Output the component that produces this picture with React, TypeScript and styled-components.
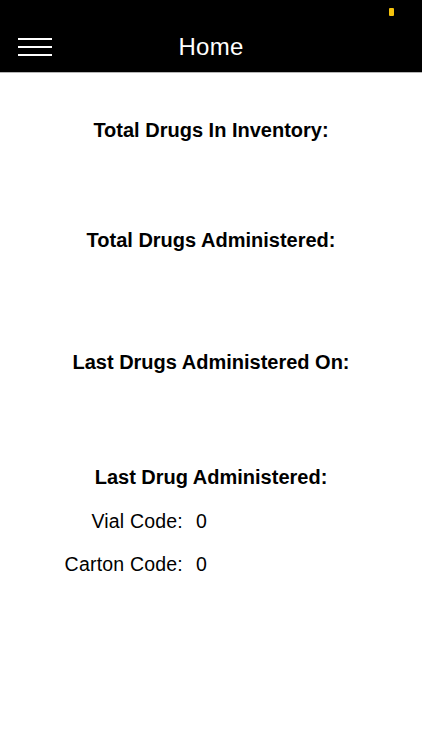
import React from 'react';
import styled, { createGlobalStyle } from 'styled-components';

const GlobalStyle = createGlobalStyle`
  html, body {
    margin: 0;
    padding: 0;
    background: #ffffff;
  }
  body {
    font-family: "Liberation Sans", Arial, Helvetica, sans-serif;
    color: #000;
  }
`;

const Screen = styled.div`
  width: 422px;
  min-height: 750px;
  display: flex;
  flex-direction: column;
  background: #fff;
`;

// top navigation bar
const NavBar = styled.header`
  position: relative;
  height: 73px;
  background: #000;
  border-bottom: 1px solid #b5b5b5;
  display: flex;
  align-items: center;
  justify-content: center;
  box-sizing: border-box;
  padding-top: 21px;
`;

const StatusMark = styled.span`
  position: absolute;
  top: 8px;
  left: 389px;
  width: 5px;
  height: 8px;
  background: #f4c20d;
  border-radius: 1px;
`;

const MenuButton = styled.button`
  position: absolute;
  left: 18px;
  top: 38px;
  width: 34px;
  height: 18px;
  padding: 0;
  border: none;
  background: transparent;
  display: flex;
  flex-direction: column;
  justify-content: space-between;
  cursor: pointer;
`;

const MenuLine = styled.span`
  display: block;
  height: 2px;
  background: #fff;
`;

const NavTitle = styled.h1`
  margin: 0;
  font-size: 24px;
  font-weight: 400;
  color: #fff;
  letter-spacing: 0.3px;
`;

const Content = styled.main`
  display: flex;
  flex-direction: column;
  align-items: center;
  padding-top: 45px;
`;

const Section = styled.section<{ $space: number }>`
  width: 100%;
  display: flex;
  flex-direction: column;
  align-items: center;
  margin-bottom: ${p => p.$space}px;
`;

const SectionTitle = styled.h2`
  margin: 0;
  font-size: 20px;
  line-height: 24px;
  font-weight: 700;
  text-align: center;
`;

const CodeGrid = styled.div`
  width: 100%;
  display: grid;
  grid-template-columns: 183px 1fr;
  column-gap: 13px;
  row-gap: 19px;
  margin-top: 20px;
`;

const CodeLabel = styled.span`
  text-align: right;
  font-size: 19.5px;
  line-height: 24px;
  letter-spacing: 0.2px;
`;

const CodeValue = styled.span`
  font-size: 19.5px;
  line-height: 24px;
`;

const sections = [
  { title: 'Total Drugs In Inventory:', space: 86 },
  { title: 'Total Drugs Administered:', space: 98 },
  { title: 'Last Drugs Administered On:', space: 91 },
];

const codes = [
  { label: 'Vial Code:', value: '0' },
  { label: 'Carton Code:', value: '0' },
];

export default function App() {
  return (
    <>
      <GlobalStyle />
      <Screen>
        <NavBar>
          <StatusMark />
          <MenuButton aria-label="Menu">
            <MenuLine />
            <MenuLine />
            <MenuLine />
          </MenuButton>
          <NavTitle>Home</NavTitle>
        </NavBar>
        <Content>
          {sections.map(s => (
            <Section key={s.title} $space={s.space}>
              <SectionTitle>{s.title}</SectionTitle>
            </Section>
          ))}
          <Section $space={0}>
            <SectionTitle>Last Drug Administered:</SectionTitle>
            <CodeGrid>
              {codes.map(c => (
                <React.Fragment key={c.label}>
                  <CodeLabel>{c.label}</CodeLabel>
                  <CodeValue>{c.value}</CodeValue>
                </React.Fragment>
              ))}
            </CodeGrid>
          </Section>
        </Content>
      </Screen>
    </>
  );
}
